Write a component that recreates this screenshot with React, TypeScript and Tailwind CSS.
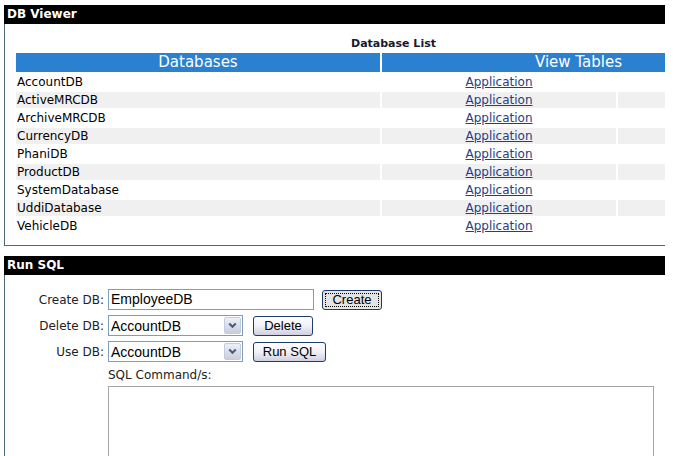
import React from 'react';

const databases = [
  'AccountDB',
  'ActiveMRCDB',
  'ArchiveMRCDB',
  'CurrencyDB',
  'PhaniDB',
  'ProductDB',
  'SystemDatabase',
  'UddiDatabase',
  'VehicleDB',
];

const PanelHeader = ({ title }: { title: string }) => (
  <div className="h-[19px] bg-black px-[3px] text-[12px] font-bold leading-[19px] text-white">{title}</div>
);

const Chevron = () => (
  <svg width="9" height="7" viewBox="0 0 9 7">
    <path d="M1.2 1.5 L4.5 4.8 L7.8 1.5" fill="none" stroke="#4a5b80" strokeWidth="2" />
  </svg>
);

const DbSelect = () => (
  <div className="relative h-[21px] w-[135px] border border-[#7f9db9] bg-white">
    <select
      defaultValue="AccountDB"
      className="h-full w-full appearance-none bg-transparent pl-[2px] text-[14px] text-black outline-none [font-family:'Liberation_Sans',Arial,sans-serif]"
    >
      {databases.map((db) => (
        <option key={db}>{db}</option>
      ))}
    </select>
    <div className="pointer-events-none absolute top-[1px] right-[1px] bottom-[1px] flex w-[17px] items-center justify-center rounded-[2px] border border-[#c3cde2] bg-gradient-to-b from-[#eef0f6] to-[#c9cedd]">
      <Chevron />
    </div>
  </div>
);

const XpButton = ({ label, width, focused = false }: { label: string; width: string; focused?: boolean }) => (
  <button
    className={`h-[20px] ${width} rounded-[3px] border border-[#1c3c6e] p-[2px] text-[13px] leading-none text-black [font-family:'Liberation_Sans',Arial,sans-serif] ${
      focused ? 'bg-[#e4e4e4]' : 'bg-gradient-to-b from-white via-[#f0f0f6] to-[#cfd0e2]'
    }`}
  >
    <span className={`flex h-full w-full items-center justify-center ${focused ? 'border border-dotted border-black' : ''}`}>
      {label}
    </span>
  </button>
);

export default function App() {
  return (
    <div className="min-h-[456px] w-[696px] bg-white pt-[5px] pl-[4px] text-[12px] text-black [font-family:'DejaVu_Sans',Verdana,sans-serif]">
      {/* DB Viewer */}
      <div className="w-[661px]">
        <PanelHeader title="DB Viewer" />
        <div className="border-b border-l border-[#4d6a78] pt-[12px] pb-[11px] pl-[11px]">
          <div className="mb-[1px] h-[16px] pl-[335px] text-[11px] leading-[16px] font-bold text-[#1a1a2e]">Database List</div>
          <div className="grid grid-cols-[364px_234px_47px] gap-[2px]">
            <div className="h-[19px] bg-[#2b80cf] text-center text-[15px] leading-[19px] text-white">Databases</div>
            <div className="col-span-2 h-[19px] bg-[#2b80cf] pl-[153px] text-[15px] leading-[19px] text-white">View Tables</div>
            {databases.map((db, i) => {
              const bg = i % 2 === 1 ? 'bg-[#f0f0f0]' : 'bg-white';
              return (
                <React.Fragment key={db}>
                  <div className={`h-[16px] pl-[1px] leading-[16px] ${bg}`}>{db}</div>
                  <div className={`h-[16px] text-center leading-[16px] ${bg}`}>
                    <a href="#" className="text-[#283c86] underline">Application</a>
                  </div>
                  <div className={`h-[16px] ${bg}`} />
                </React.Fragment>
              );
            })}
          </div>
        </div>
      </div>

      {/* Run SQL */}
      <div className="mt-[10px] w-[661px]">
        <PanelHeader title="Run SQL" />
        <div className="min-h-[200px] border-l border-[#4d6a78] pt-[14px] pl-[1px] text-[#222]">
          <div className="flex items-center">
            <label className="w-[99px] pr-[1px] text-right">Create DB:</label>
            <input
              defaultValue="EmployeeDB"
              className="ml-[3px] h-[21px] w-[206px] border border-[#7f9db9] px-[2px] text-[14px] text-black outline-none [font-family:'Liberation_Sans',Arial,sans-serif]"
            />
            <div className="ml-[8px]">
              <XpButton label="Create" width="w-[60px]" focused />
            </div>
          </div>
          <div className="mt-[5px] flex items-center">
            <label className="w-[99px] pr-[1px] text-right">Delete DB:</label>
            <div className="ml-[3px]">
              <DbSelect />
            </div>
            <div className="ml-[10px]">
              <XpButton label="Delete" width="w-[60px]" />
            </div>
          </div>
          <div className="mt-[5px] flex items-center">
            <label className="w-[99px] pr-[1px] text-right">Use DB:</label>
            <div className="ml-[3px]">
              <DbSelect />
            </div>
            <div className="ml-[10px]">
              <XpButton label="Run SQL" width="w-[73px]" />
            </div>
          </div>
          <div className="mt-[5px] ml-[102px] h-[16px] leading-[16px]">SQL Command/s:</div>
          <textarea className="mt-[3px] ml-[102px] block h-[100px] w-[546px] resize-none border border-[#a5a5a5] outline-none" />
        </div>
      </div>
    </div>
  );
}
